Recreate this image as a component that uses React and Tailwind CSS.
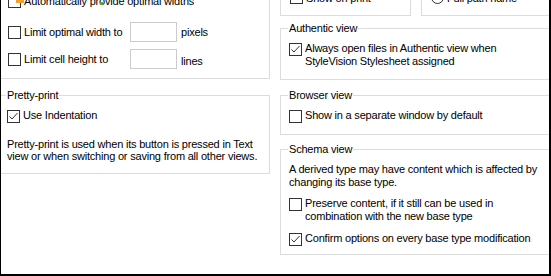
import React from "react"

function Check({ checked, className = "" }) {
  return (
    <span className={"inline-block shrink-0 w-[13px] h-[13px] border border-[#333333] bg-white " + className}>
      {checked && (
        <svg width="11" height="11" viewBox="0 0 11 11" className="block">
          <polyline points="1.5,5.5 4,8 9.5,2" fill="none" stroke="#333333" strokeWidth="1" />
        </svg>
      )}
    </span>
  )
}

function Group({ title, className = "", children }) {
  return (
    <fieldset className={"border border-[#dcdcdc] pl-[7px] pr-2 " + className}>
      <legend className="px-[1px] leading-[13px]">{title}</legend>
      <div className="pl-[1px] pt-[7px]">{children}</div>
    </fieldset>
  )
}

function CheckRow({ checked, children, className = "" }) {
  return (
    <div className={"flex items-start " + className}>
      <Check checked={checked} className="mt-[1px]" />
      <span className="ml-[3px]">{children}</span>
    </div>
  )
}

export default function App() {
  return (
    <div className="relative w-[551px] h-[276px] overflow-hidden bg-white border-l border-r-2 border-b-2 border-black text-[11px] leading-[13px] tracking-[-0.2px] text-black font-['Liberation_Sans',Arial,sans-serif]">
      <div className="flex gap-[10px] -ml-[3px]">
        {/* left column */}
        <div className="w-[272px] shrink-0 flex flex-col">
          <div className="border border-[#dcdcdc] -mt-[20px] pt-[14px] pb-[9px] pl-[8px]">
            <div className="flex items-center h-[13px] pl-[1px]">
              <Check />
              <span className="ml-[3px]">Automatically provide optimal widths</span>
            </div>
            <div className="flex items-center mt-[14px] pl-[1px]">
              <div className="w-[122px] flex items-center">
                <Check />
                <span className="ml-[3px]">Limit optimal width to</span>
              </div>
              <div className="w-[47px] h-[20px] border border-[#cccccc]" />
              <span className="ml-[4px]">pixels</span>
            </div>
            <div className="flex items-center mt-[7px] pl-[1px]">
              <div className="w-[122px] flex items-center">
                <Check />
                <span className="ml-[3px]">Limit cell height to</span>
              </div>
              <div className="w-[47px] h-[20px] border border-[#cccccc]" />
              <span className="ml-[4px] mt-[4px]">lines</span>
            </div>
          </div>
          <Group title="Pretty-print" className="mt-[10px] pb-[11px]">
            <CheckRow checked>Use Indentation</CheckRow>
            <p className="mt-[15px] leading-[12px]">
              Pretty-print is used when its button is pressed in Text
              <br />
              view or when switching or saving from all other views.
            </p>
          </Group>
        </div>

        {/* right column */}
        <div className="w-[300px] shrink-0 flex flex-col">
          <div className="flex gap-[10px] -mt-[10px]">
            <div className="w-[131px] h-[26px] border border-[#dcdcdc] pl-[9px] flex items-start">
              <Check />
              <span className="ml-[3px] mt-[1px]">Show on print</span>
            </div>
            <div className="flex-1 h-[26px] border border-[#dcdcdc] pl-[9px] flex items-start">
              <span className="inline-block w-[13px] h-[13px] rounded-full border border-[#333333]" />
              <span className="ml-[3px] mt-[1px]">Full path name</span>
            </div>
          </div>
          <Group title="Authentic view" className="mt-[6px] pb-[11px]">
            <CheckRow checked>
              Always open files in Authentic view when
              <br />
              StyleVision Stylesheet assigned
            </CheckRow>
          </Group>
          <Group title="Browser view" className="mt-[9px] pb-[11px]">
            <CheckRow>Show in a separate window by default</CheckRow>
          </Group>
          <Group title="Schema view" className="mt-[8px] pb-[8px]">
            <p>
              A derived type may have content which is affected by
              <br />
              changing its base type.
            </p>
            <CheckRow className="mt-[8px]">
              Preserve content, if it still can be used in
              <br />
              combination with the new base type
            </CheckRow>
            <CheckRow checked className="mt-[9px]">
              Confirm options on every base type modification
            </CheckRow>
          </Group>
        </div>
      </div>
      {/* partly visible icon overlapping the first checkbox */}
      <span className="absolute left-[15px] top-0 w-[8px] h-[3px] bg-[#f0a030]" />
      <span className="absolute left-[99px] top-[2px] w-[3px] h-[3px] bg-[#5aa03c]" />
    </div>
  )
}
